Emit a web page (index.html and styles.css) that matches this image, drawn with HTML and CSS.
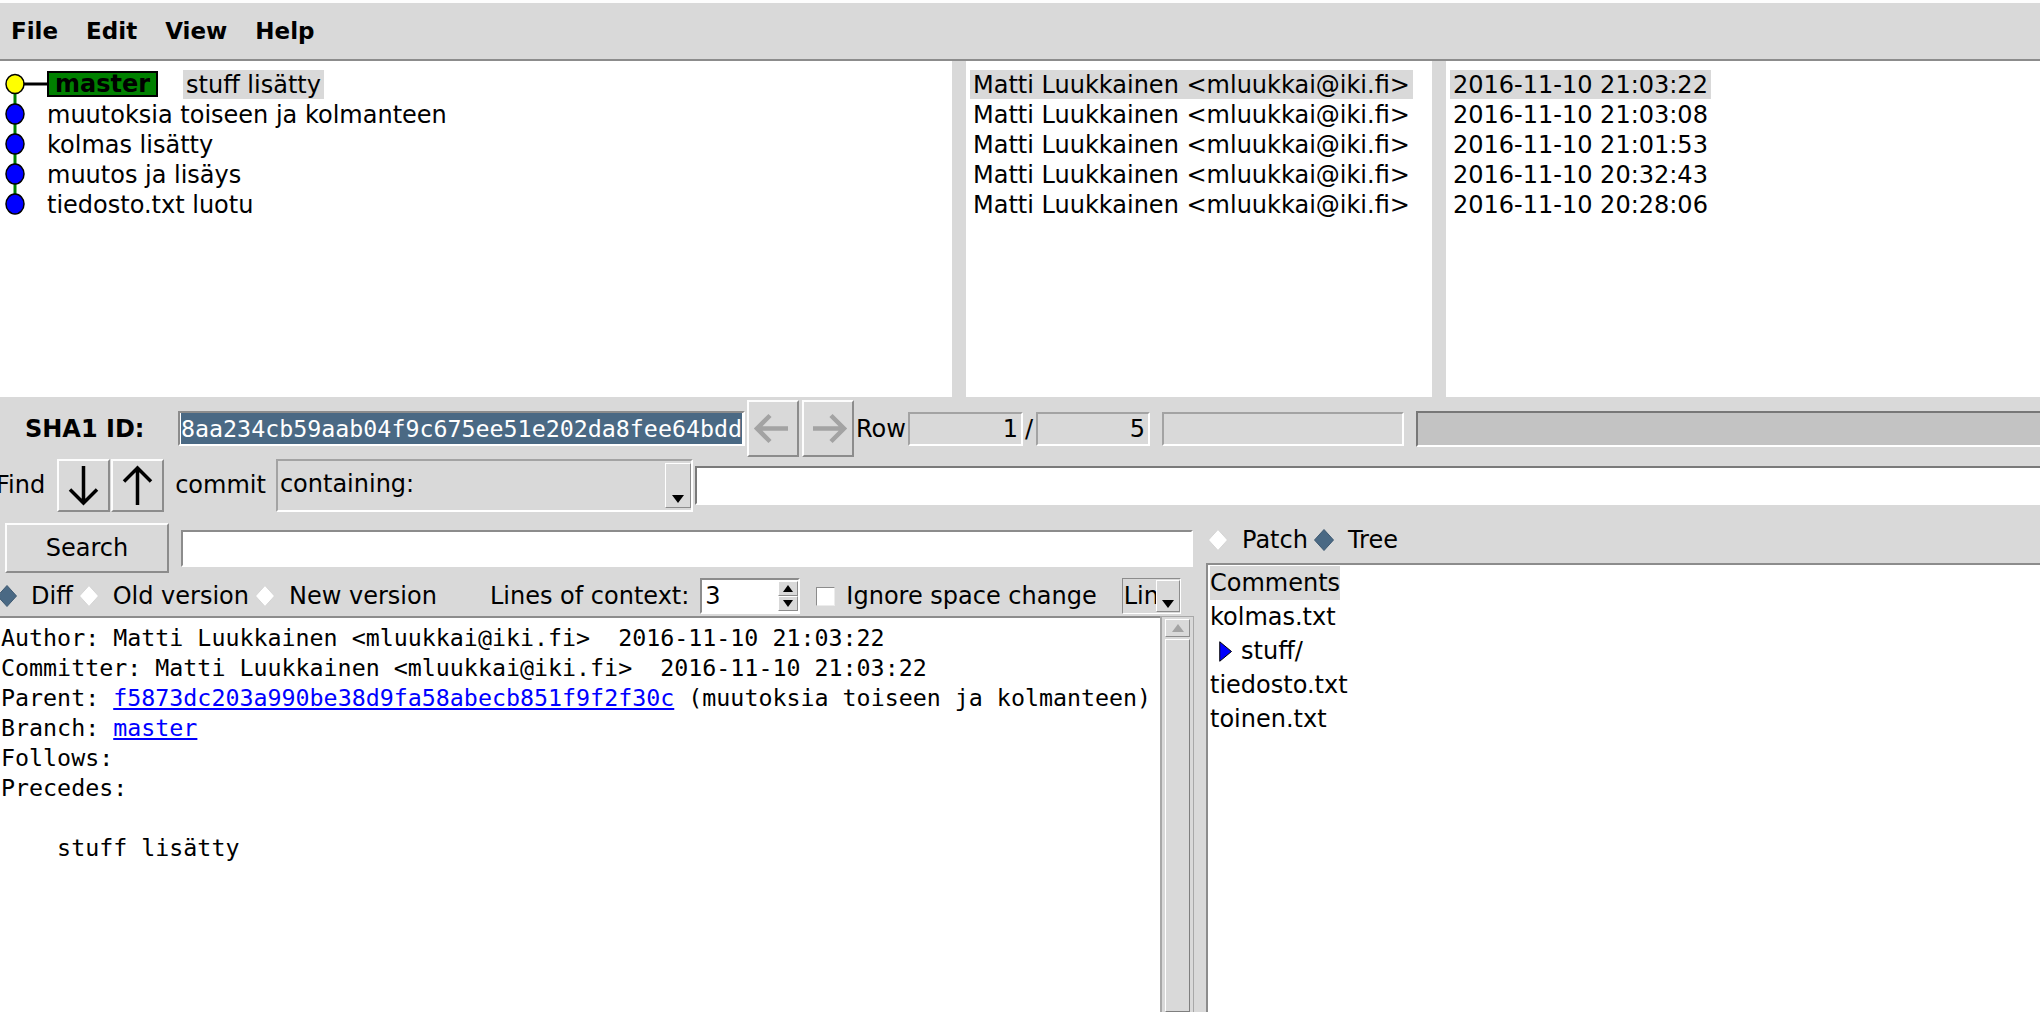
FILE: index.html
```html
<!DOCTYPE html>
<html lang="fi">
<head>
<meta charset="utf-8">
<title>gitk</title>
<link rel="stylesheet" href="styles.css">
</head>
<body>
<div class="app">
  <div class="menubar">
    <span class="menu">File</span>
    <span class="menu">Edit</span>
    <span class="menu">View</span>
    <span class="menu">Help</span>
  </div>

  <div class="toppanes">
    <div class="pane graph">
      <svg class="gsvg" width="47" height="150" viewBox="0 0 47 150">
        <line x1="15" y1="14" x2="15" y2="134" stroke="#008000" stroke-width="3"/>
        <line x1="22" y1="14" x2="47" y2="14" stroke="#000" stroke-width="3"/>
        <ellipse cx="15" cy="14" rx="9" ry="9.5" fill="#ffff00" stroke="#000" stroke-width="1.5"/>
        <ellipse cx="15" cy="44" rx="9" ry="10" fill="#0000ff" stroke="#000" stroke-width="1.5"/>
        <ellipse cx="15" cy="74" rx="9" ry="10" fill="#0000ff" stroke="#000" stroke-width="1.5"/>
        <ellipse cx="15" cy="104" rx="9" ry="10" fill="#0000ff" stroke="#000" stroke-width="1.5"/>
        <ellipse cx="15" cy="134" rx="9" ry="10" fill="#0000ff" stroke="#000" stroke-width="1.5"/>
      </svg>
      <div class="glist">
        <div class="row"><span class="tag">master</span><span class="sel msg">stuff lisätty</span></div>
        <div class="row">muutoksia toiseen ja kolmanteen</div>
        <div class="row">kolmas lisätty</div>
        <div class="row">muutos ja lisäys</div>
        <div class="row">tiedosto.txt luotu</div>
      </div>
    </div>
    <div class="sash"></div>
    <div class="pane authors">
      <div class="row"><span class="sel">Matti Luukkainen &lt;mluukkai@iki.fi&gt;</span></div>
      <div class="row"><span class="plain">Matti Luukkainen &lt;mluukkai@iki.fi&gt;</span></div>
      <div class="row"><span class="plain">Matti Luukkainen &lt;mluukkai@iki.fi&gt;</span></div>
      <div class="row"><span class="plain">Matti Luukkainen &lt;mluukkai@iki.fi&gt;</span></div>
      <div class="row"><span class="plain">Matti Luukkainen &lt;mluukkai@iki.fi&gt;</span></div>
    </div>
    <div class="sash"></div>
    <div class="pane dates">
      <div class="row"><span class="sel">2016-11-10 21:03:22</span></div>
      <div class="row"><span class="plain">2016-11-10 21:03:08</span></div>
      <div class="row"><span class="plain">2016-11-10 21:01:53</span></div>
      <div class="row"><span class="plain">2016-11-10 20:32:43</span></div>
      <div class="row"><span class="plain">2016-11-10 20:28:06</span></div>
    </div>
  </div>

  <div class="sharow">
    <span class="shalabel">SHA1 ID:</span>
    <div class="shaentry"><span class="shasel">8aa234cb59aab04f9c675ee51e202da8fee64bdd</span></div>
    <div class="navbtn">
      <svg width="48" height="53" viewBox="0 0 48 53"><path d="M8 26.5 H39 M21 13.5 L8 26.5 L21 39.5" fill="none" stroke="#a3a3a3" stroke-width="4.5"/></svg>
    </div>
    <div class="navbtn next">
      <svg width="48" height="53" viewBox="0 0 48 53"><path d="M40 26.5 H9 M27 13.5 L40 26.5 L27 39.5" fill="none" stroke="#a3a3a3" stroke-width="4.5"/></svg>
    </div>
    <span class="rowlbl">Row</span>
    <div class="rofield f1">1</div>
    <span class="slash">/</span>
    <div class="rofield f2">5</div>
    <div class="rofield f3"></div>
    <div class="progress"></div>
  </div>

  <div class="findrow">
    <span class="findlbl">Find</span>
    <div class="arrowbtn down">
      <svg width="49" height="49" viewBox="0 0 49 49"><path d="M24.5 5 V42 M11 28.5 L24.5 42 L38 28.5" fill="none" stroke="#000" stroke-width="3.5"/></svg>
    </div>
    <div class="arrowbtn up">
      <svg width="49" height="49" viewBox="0 0 49 49"><path d="M24.5 44 V7 M11 20.5 L24.5 7 L38 20.5" fill="none" stroke="#000" stroke-width="3.5"/></svg>
    </div>
    <span class="commitlbl">commit</span>
    <div class="combo">
      <span class="combotext">containing:</span>
      <span class="combobtn"><svg width="12" height="8" viewBox="0 0 12 8"><path d="M0 0 H12 L6 8 Z" fill="#000"/></svg></span>
    </div>
    <div class="findentry"></div>
  </div>

  <div class="bottom">
    <div class="left">
      <div class="searchrow">
        <div class="searchbtn">Search</div>
        <div class="searchentry"></div>
      </div>
      <div class="optrow">
        <svg class="dia first" width="20" height="22" viewBox="0 0 20 22"><path d="M10 0.5 L19.5 11 L10 21.5 L0.5 11 Z" fill="#4a6984" stroke="#3f5a72"/></svg>
        <span class="optlbl">Diff</span>
        <svg class="dia" width="20" height="22" viewBox="0 0 20 22"><path d="M10 0.5 L19.5 11 L10 21.5 L0.5 11 Z" fill="#fff" stroke="#d4d4d4"/></svg>
        <span class="optlbl">Old version</span>
        <svg class="dia" width="20" height="22" viewBox="0 0 20 22"><path d="M10 0.5 L19.5 11 L10 21.5 L0.5 11 Z" fill="#fff" stroke="#d4d4d4"/></svg>
        <span class="optlbl">New version</span>
        <span class="ctxlbl">Lines of context:</span>
        <div class="spin">
          <span class="spinval">3</span>
          <span class="spinbtns">
            <span class="spinbtn"><svg width="10" height="7" viewBox="0 0 10 7"><path d="M0 7 H10 L5 0 Z" fill="#000"/></svg></span>
            <span class="spinbtn"><svg width="10" height="7" viewBox="0 0 10 7"><path d="M0 0 H10 L5 7 Z" fill="#000"/></svg></span>
          </span>
        </div>
        <span class="check"></span>
        <span class="ignlbl">Ignore space change</span>
        <div class="lincombo">
          <span class="lintext">Line diff</span>
          <span class="linbtn"><svg width="12" height="8" viewBox="0 0 12 8"><path d="M0 0 H12 L6 8 Z" fill="#000"/></svg></span>
        </div>
      </div>
      <div class="ctextarea">
        <div class="ctext">
          <div class="cline">Author: Matti Luukkainen &lt;mluukkai@iki.fi&gt;  2016-11-10 21:03:22</div>
          <div class="cline">Committer: Matti Luukkainen &lt;mluukkai@iki.fi&gt;  2016-11-10 21:03:22</div>
          <div class="cline">Parent: <a href="#">f5873dc203a990be38d9fa58abecb851f9f2f30c</a> (muutoksia toiseen ja kolmanteen)</div>
          <div class="cline">Branch: <a href="#">master</a></div>
          <div class="cline">Follows:</div>
          <div class="cline">Precedes:</div>
          <div class="cline"> </div>
          <div class="cline">    stuff lisätty</div>
        </div>
        <div class="vscroll">
          <div class="sbup"><svg width="12" height="8" viewBox="0 0 12 8"><path d="M0 8 H12 L6 0 Z" fill="#a3a3a3"/></svg></div>
          <div class="sbslider"></div>
        </div>
      </div>
    </div>
    <div class="vsash"></div>
    <div class="right">
      <div class="radiorow">
        <svg class="dia first" width="20" height="22" viewBox="0 0 20 22"><path d="M10 0.5 L19.5 11 L10 21.5 L0.5 11 Z" fill="#fff" stroke="#d4d4d4"/></svg>
        <span class="optlbl">Patch</span>
        <svg class="dia" width="20" height="22" viewBox="0 0 20 22"><path d="M10 0.5 L19.5 11 L10 21.5 L0.5 11 Z" fill="#4a6984" stroke="#3f5a72"/></svg>
        <span class="optlbl">Tree</span>
      </div>
      <div class="cflist">
        <div class="cfrow"><span class="cfsel">Comments</span></div>
        <div class="cfrow">kolmas.txt</div>
        <div class="cfrow"><svg class="tri" width="13" height="21" viewBox="0 0 13 21"><path d="M0.75 0.75 L12.5 10.5 L0.75 20.25 Z" fill="#0000ff" stroke="#000" stroke-width="1"/></svg><span class="dirname">stuff/</span></div>
        <div class="cfrow">tiedosto.txt</div>
        <div class="cfrow">toinen.txt</div>
      </div>
    </div>
  </div>
</div>
</body>
</html>
```

FILE: styles.css
```css
* { box-sizing: border-box; }
html, body { margin: 0; padding: 0; }
body {
  width: 2040px;
  height: 1012px;
  overflow: hidden;
  background: #d9d9d9;
  font-family: "DejaVu Sans", "Noto Sans", sans-serif;
  font-size: 24px;
  color: #000;
}
.app { display: flex; flex-direction: column; height: 1012px; }

/* menu */
.menubar {
  flex: none;
  height: 61px;
  border-top: 3px solid #fdfdfd;
  border-bottom: 2px solid #8c8c8c;
  display: flex;
  align-items: center;
  gap: 28px;
  padding-left: 11px;
  font-weight: bold;
  font-size: 23px;
}

/* top panes */
.toppanes { flex: none; height: 336px; display: flex; }
.pane { background: #fff; padding-top: 9px; overflow: hidden; }
.graph { flex: none; width: 952px; display: flex; align-items: flex-start; }
.gsvg { flex: none; display: block; }
.glist { flex: 1; }
.sash { flex: none; width: 14px; }
.authors { flex: none; width: 466px; padding-left: 4px; }
.dates { flex: 1; padding-left: 4px; }
.row { height: 30px; line-height: 30px; white-space: nowrap; }
.sel {
  display: inline-block;
  vertical-align: top;
  background: #d9d9d9;
  padding: 0 3px;
  height: 29px;
  line-height: 30px;
}
.plain { padding: 0 3px; }
.tag {
  display: inline-block;
  vertical-align: top;
  margin-top: 1px;
  height: 26px;
  line-height: 22px;
  border: 2px solid #000;
  background: #008000;
  padding: 0 6px;
  font-weight: bold;
}
.msg { margin-left: 25px; }

/* sha row */
.sharow { flex: none; height: 61px; display: flex; align-items: center; padding-top: 2px; white-space: nowrap; }
.shalabel { flex: none; font-weight: bold; margin-left: 25px; width: 153px; }
.shaentry {
  flex: none;
  width: 567px;
  height: 35px;
  border: 2px solid;
  border-color: #8c8c8c #fff #fff #8c8c8c;
  background: #fff;
  padding: 0 1px;
}
.shasel {
  display: block;
  height: 31px;
  background: #4a6984;
  color: #fff;
  font-family: "DejaVu Sans Mono", monospace;
  font-size: 23.3px;
  line-height: 31px;
  white-space: nowrap;
  overflow: hidden;
}
.navbtn {
  flex: none;
  width: 52px;
  height: 57px;
  margin-left: 2px;
  border: 2px solid;
  border-color: #fdfdfd #8c8c8c #8c8c8c #fdfdfd;
  display: flex;
  align-items: center;
  justify-content: center;
}
.navbtn svg, .arrowbtn svg { display: block; }
.navbtn.next { margin-left: 3px; }
.rowlbl { margin-left: 2px; }
.rofield {
  flex: none;
  height: 34px;
  border: 2px solid;
  border-color: #a3a3a3 #fff #fff #a3a3a3;
  text-align: right;
  line-height: 30px;
  padding-right: 3px;
}
.f1 { width: 115px; margin-left: 2px; }
.slash { margin: 0 3px 0 2px; }
.f2 { width: 114px; }
.f3 { width: 242px; margin-left: 12px; }
.progress {
  flex: 1;
  height: 36px;
  margin-left: 12px;
  border: 2px solid;
  border-color: #777 #fff #fff #777;
  border-right: none;
  background: #c3c3c3;
}

/* find row */
.findrow { flex: none; height: 54px; display: flex; align-items: center; white-space: nowrap; }
.findlbl { margin-left: -4px; }
.arrowbtn {
  flex: none;
  width: 53px;
  height: 53px;
  border: 2px solid;
  border-color: #fdfdfd #8c8c8c #8c8c8c #fdfdfd;
  display: flex;
  align-items: center;
  justify-content: center;
}
.arrowbtn.down { margin-left: 12px; }
.arrowbtn.up { margin-left: 1px; }
.commitlbl { margin-left: 11px; }
.combo {
  flex: none;
  display: flex;
  margin-left: 10px;
  width: 417px;
  height: 53px;
  border: 2px solid;
  border-color: #a3a3a3 #fff #fff #a3a3a3;
}
.combotext { flex: 1; padding-left: 2px; line-height: 46px; white-space: nowrap; overflow: hidden; }
.combobtn {
  flex: none;
  width: 26px;
  margin: 2px 0;
  border: 1px solid;
  border-color: #fff #8c8c8c #8c8c8c #fff;
  display: flex;
  align-items: flex-end;
  justify-content: center;
  padding-bottom: 4px;
}
.combobtn svg, .linbtn svg, .spinbtn svg, .sbup svg { display: block; }
.findentry {
  flex: 1;
  height: 39px;
  margin-left: 2px;
  background: #fff;
  border: 2px solid;
  border-color: #7a7a7a #fff #fff #7a7a7a;
  border-right: none;
}

/* bottom */
.bottom { flex: 1; display: flex; min-height: 0; }
.left { flex: none; width: 1194px; display: flex; flex-direction: column; }
.searchrow { flex: none; height: 64px; display: flex; align-items: center; padding: 11px 1px 3px 5px; }
.searchbtn {
  flex: none;
  width: 164px;
  height: 50px;
  border: 2px solid;
  border-color: #fdfdfd #8c8c8c #8c8c8c #fdfdfd;
  text-align: center;
  line-height: 46px;
}
.searchentry {
  flex: 1;
  height: 37px;
  margin-left: 12px;
  background: #fff;
  border: 2px solid;
  border-color: #8c8c8c #fff #fff #8c8c8c;
}
.optrow { flex: none; height: 40px; display: flex; align-items: center; white-space: nowrap; }
.dia { flex: none; display: block; }
.optrow .dia.first { margin-left: -3px; }
.optlbl { margin-left: 14px; margin-right: 6px; }
.ctxlbl { margin-left: 47px; }
.spin {
  flex: none;
  display: flex;
  width: 100px;
  height: 36px;
  margin-left: 11px;
  background: #fff;
  border: 2px solid;
  border-color: #8c8c8c #fff #fff #8c8c8c;
}
.spinval { flex: 1; padding-left: 3px; line-height: 32px; }
.spinbtns { flex: none; width: 20px; display: flex; flex-direction: column; padding: 1px 0; }
.spinbtn {
  flex: 1;
  border: 1px solid;
  border-color: #fff #8c8c8c #8c8c8c #fff;
  background: #d9d9d9;
  display: flex;
  align-items: center;
  justify-content: center;
}
.check {
  flex: none;
  width: 19px;
  height: 19px;
  margin-left: 16px;
  background: #fff;
  border: 1px solid;
  border-color: #8c8c8c #ececec #ececec #8c8c8c;
}
.ignlbl { margin-left: 11px; }
.lincombo {
  flex: none;
  display: flex;
  width: 59px;
  height: 36px;
  margin-left: 25px;
  border: 1px solid;
  border-color: #8c8c8c #fff #fff #8c8c8c;
}
.lintext { flex: none; width: 33px; overflow: hidden; white-space: nowrap; padding-left: 1px; line-height: 34px; }
.linbtn {
  flex: none;
  width: 24px;
  margin: 1px 0;
  border: 1px solid;
  border-color: #fff #8c8c8c #8c8c8c #fff;
  display: flex;
  align-items: flex-end;
  justify-content: center;
  padding-bottom: 3px;
}
.ctextarea { flex: 1; display: flex; min-height: 0; }
.ctext {
  flex: 1;
  background: #fff;
  border-top: 2px solid #8c8c8c;
  padding: 5px 0 0 1px;
  font-family: "DejaVu Sans Mono", monospace;
  font-size: 23.3px;
  overflow: hidden;
}
.cline { height: 30px; line-height: 30px; white-space: pre; }
.ctext a { color: #0000ff; text-decoration: underline; }
.vscroll {
  flex: none;
  width: 34px;
  display: flex;
  flex-direction: column;
  gap: 2px;
  border-left: 2px solid #a8a8a8;
  border-right: 1px solid #a8a8a8;
  border-top: 1px solid #a8a8a8;
  padding: 2px 3px 0 3px;
}
.sbup {
  flex: none;
  height: 18px;
  border: 1px solid;
  border-color: #fff #8c8c8c #8c8c8c #fff;
  display: flex;
  align-items: center;
  justify-content: center;
}
.sbslider { flex: 1; border: 1px solid; border-color: #fff #7f7f7f #7f7f7f #fff; }
.vsash { flex: none; width: 12px; }
.right { flex: 1; display: flex; flex-direction: column; min-width: 0; }
.radiorow { flex: none; height: 51px; display: flex; align-items: center; padding-top: 5px; white-space: nowrap; }
.radiorow .dia.first { margin-left: 2px; }
.cflist {
  flex: 1;
  background: #fff;
  border-top: 2px solid #8c8c8c;
  border-left: 2px solid #8c8c8c;
  padding: 1px 0 0 2px;
}
.cfrow { height: 34px; line-height: 34px; white-space: nowrap; display: flex; align-items: center; }
.cfsel { background: #d9d9d9; height: 34px; }
.tri { flex: none; display: block; margin-left: 9px; }
.dirname { margin-left: 9px; }
```
